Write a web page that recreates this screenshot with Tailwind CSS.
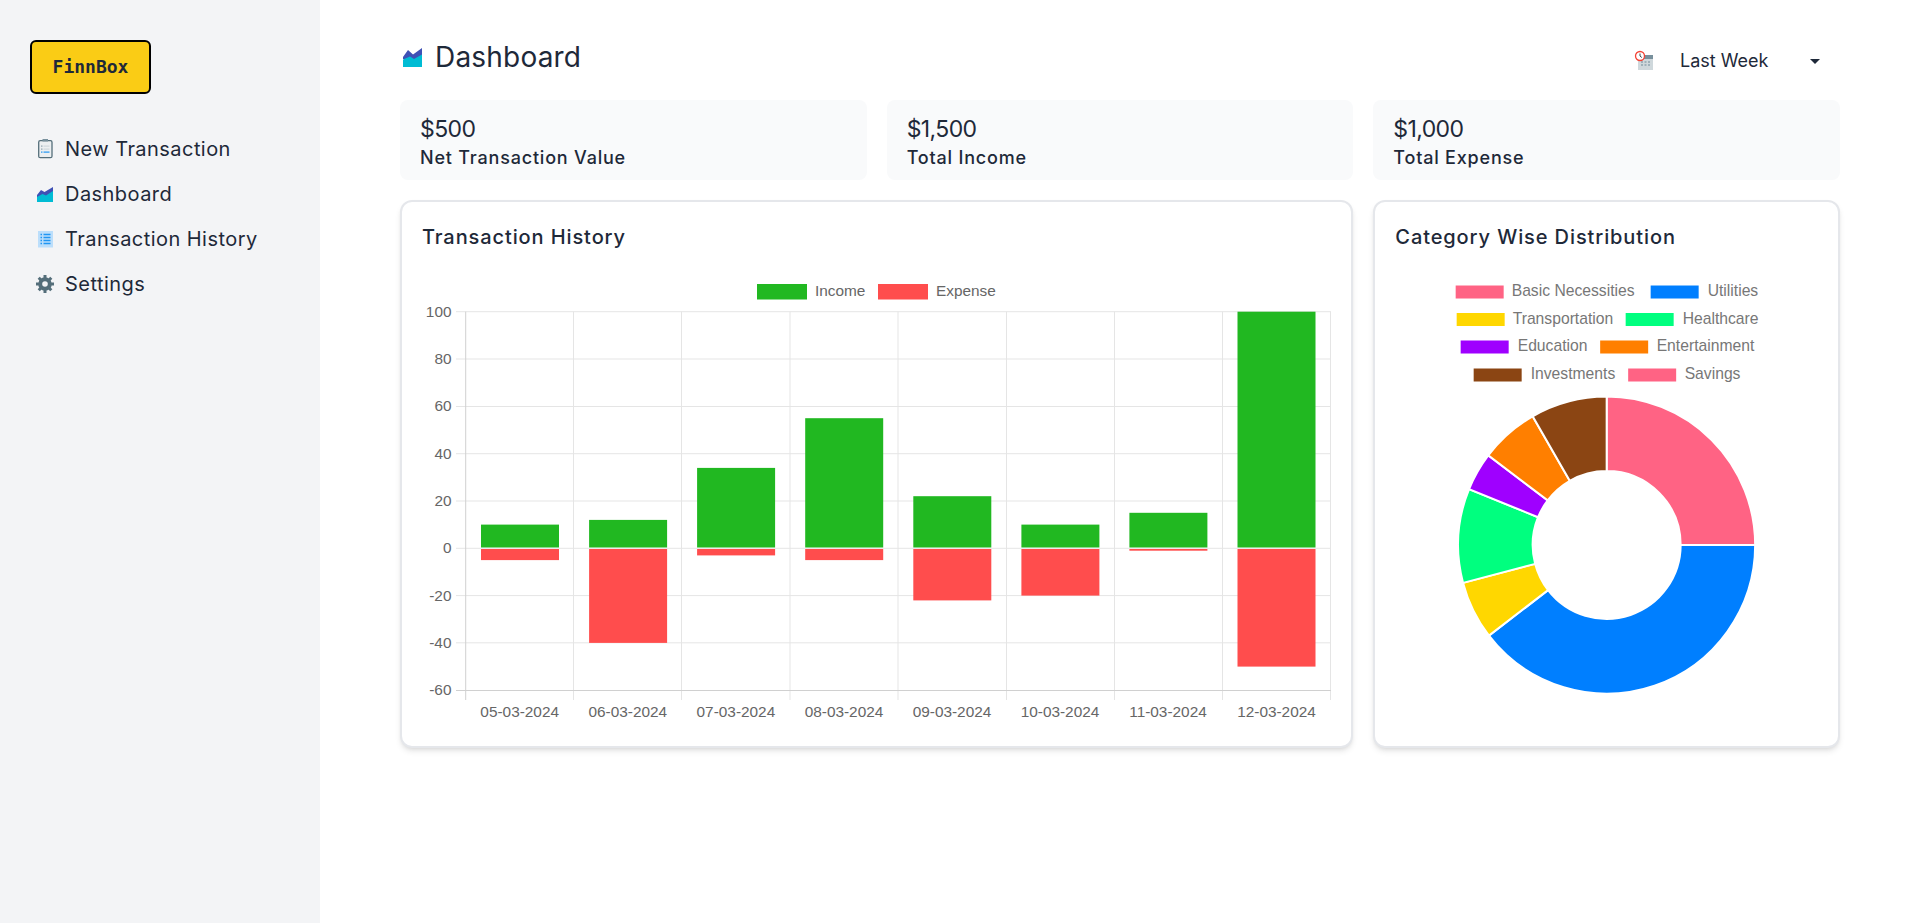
<!DOCTYPE html>
<html lang="en">
<head>
    <meta charset="UTF-8">
    <meta name="viewport" content="width=device-width, initial-scale=1.0">
    <title>FinnBox Dashboard</title>
    <script src="https://cdn.jsdelivr.net/npm/@tailwindcss/browser@4"></script>
</head>
<body class="bg-white font-['Inter',sans-serif] text-gray-800">
<div class="flex h-[923px] overflow-hidden">
    <!-- Sidebar -->
    <aside class="w-80 shrink-0 bg-gray-100 pl-[30px] pt-10">
        <div class="flex h-[54px] w-[121px] items-center justify-center rounded-md border-2 border-black bg-[#facc15] font-['DejaVu_Sans_Mono',monospace] text-lg font-bold">FinnBox</div>
        <nav class="mt-[32px] flex flex-col text-xl">
            <a class="flex h-[45px] items-center gap-[11px] pl-[5px]">
                <svg class="h-6 w-[19px]" viewBox="0 0 19 24">
                    <rect x="3.700" y="3.700" width="13.300" height="17" rx="1.500" fill="#eceff1" stroke="#546e7a" stroke-width="1.300"/>
                    <rect x="7.500" y="2" width="5.500" height="2.500" fill="#78909c"/>
                    <rect x="6" y="8.500" width="1.500" height="1.200" fill="#90a4ae"/>
                    <rect x="8.500" y="8.500" width="6" height="1.200" fill="#cfd8dc"/>
                    <rect x="6" y="11.500" width="1.500" height="1.200" fill="#90a4ae"/>
                    <rect x="8.500" y="11.500" width="6" height="1.200" fill="#cfd8dc"/>
                    <rect x="6" y="14.500" width="1.500" height="1.200" fill="#2196f3"/>
                    <rect x="8.500" y="14.500" width="6" height="1.200" fill="#2196f3"/>
                </svg>
                <span class="tracking-[0.45px]">New Transaction</span>
            </a>
            <a class="flex h-[45px] items-center gap-[11px] pl-[5px]">
                <svg class="h-6 w-[19px]" viewBox="0 0 19 24">
                    <path d="M2 13 L6 8 L9.500 10 L18 5 V15 H2Z" fill="#3f51b5"/>
                    <path d="M2 15 L7.500 12 L11 13.500 L18 9 V20 H2Z" fill="#00bcd4"/>
                </svg>
                <span class="tracking-[0.45px]">Dashboard</span>
            </a>
            <a class="flex h-[45px] items-center gap-[11px] pl-[5px]">
                <svg class="h-6 w-[19px]" viewBox="0 0 19 24">
                    <rect x="3" y="4" width="15" height="16.500" fill="#bbdefb"/>
                    <path d="M5.500 7.500h1.500M8.500 7.500h7M5.500 10.500h1.500M8.500 10.500h7M5.500 13.500h1.500M8.500 13.500h7M5.500 16.500h1.500M8.500 16.500h7" stroke="#2196f3" stroke-width="1.300"/>
                </svg>
                <span class="tracking-[0.45px]">Transaction History</span>
            </a>
            <a class="flex h-[45px] items-center gap-[11px] pl-[5px]">
                <svg class="h-6 w-[19px]" viewBox="0 0 19 24">
                    <circle cx="10" cy="12" r="4.800" fill="none" stroke="#546e7a" stroke-width="4"/>
                    <path d="M10 3v18M1 12h18M3.700 5.700l12.600 12.600M16.300 5.700L3.700 18.300" stroke="#546e7a" stroke-width="3"/>
                    <circle cx="10" cy="12" r="2.800" fill="#f3f4f6"/>
                </svg>
                <span class="tracking-[0.45px]">Settings</span>
            </a>
        </nav>
    </aside>

    <!-- Main -->
    <main class="flex-1 px-20">
        <header class="flex h-[100px] justify-between pt-[37px]">
            <div class="flex h-10 items-center gap-[12px] pl-[2px]">
                <svg class="h-6 w-[21px]" viewBox="0 0 21 24">
                    <path d="M1 12 L6 5 L11 9.500 L20 3 V14 H1Z" fill="#3f51b5"/>
                    <path d="M1 14.500 L8 11.500 L12 14 L20 9.500 V22 H1Z" fill="#00bcd4"/>
                </svg>
                <h1 class="text-[28px] tracking-[0.2px]">Dashboard</h1>
            </div>
            <div class="flex h-12 items-center pr-[20px]">
                <svg class="h-[22px] w-[22px]" viewBox="0 0 22 22">
                    <rect x="4" y="5" width="15" height="15" fill="#cfd8dc"/>
                    <rect x="4" y="5" width="15" height="4" fill="#78909c"/>
                    <path d="M7 12h2M10.500 12h2M14 12h2M7 15h2M10.500 15h2M14 15h2" stroke="#90a4ae" stroke-width="1.500"/>
                    <circle cx="6" cy="6" r="4.500" fill="#fff" stroke="#f44336" stroke-width="1.300"/>
                    <path d="M6 3.500V6l1.800 1.500" fill="none" stroke="#37474f" stroke-width="1"/>
                </svg>
                <span class="ml-[24px] w-[130px] text-lg">Last Week</span>
                <span class="h-0 w-0 border-x-[5px] border-t-[5px] border-x-transparent border-t-gray-800"></span>
            </div>
        </header>

        <!-- Stat cards -->
        <section class="grid grid-cols-3 gap-5">
            <div class="flex h-20 flex-col rounded-lg bg-gray-50 px-5 pt-[13px]">
                <div class="text-[23px] leading-8 tracking-[-0.6px]">$500</div>
                <div class="text-lg font-[450] leading-[26px] tracking-[0.8px]">Net Transaction Value</div>
            </div>
            <div class="flex h-20 flex-col rounded-lg bg-gray-50 px-5 pt-[13px]">
                <div class="text-[23px] leading-8 tracking-[-0.6px]">$1,500</div>
                <div class="text-lg font-[450] leading-[26px] tracking-[0.8px]">Total Income</div>
            </div>
            <div class="flex h-20 flex-col rounded-lg bg-gray-50 px-5 pt-[13px]">
                <div class="text-[23px] leading-8 tracking-[-0.6px]">$1,000</div>
                <div class="text-lg font-[450] leading-[26px] tracking-[0.8px]">Total Expense</div>
            </div>
        </section>

        <!-- Charts -->
        <section class="mt-5 grid grid-cols-3 gap-5">
            <div class="col-span-2 h-[548px] rounded-xl border-2 border-gray-200 bg-white shadow-md">
                <h2 class="px-5 pt-[21px] text-xl font-[450] leading-7 tracking-[0.9px]">Transaction History</h2>
                <svg class="block w-full font-['Liberation_Sans',sans-serif] text-[15.4px]" height="490" viewBox="402 251 949.33 490">
                    <!-- legend -->
                    <rect x="757" y="284" width="50" height="15.500" fill="#21b821"/>
                    <text x="815" y="296.500" fill="#666">Income</text>
                    <rect x="878" y="284" width="50" height="15.500" fill="#ff4d4d"/>
                    <text x="936" y="296.500" fill="#666">Expense</text>
                    <!-- grid -->
                    <g stroke="#e5e5e5" stroke-width="1">
                        <path d="M456 311.700H1331M456 359H1331M456 406.500H1331M456 453.700H1331M456 501H1331M456 548.300H1331M456 595.600H1331M456 642.800H1331"/>
                        <path d="M573.500 311.700V700M681.500 311.700V700M790 311.700V700M898 311.700V700M1006.500 311.700V700M1114.500 311.700V700M1222.500 311.700V700M1330.500 311.700V700"/>
                    </g>
                    <path d="M465.700 311.700V700M456 690.500H1331" stroke="#d0d0d0" stroke-width="1" fill="none"/>
                    <!-- y axis -->
                    <g fill="#666" text-anchor="end">
                        <text x="451.500" y="317">100</text>
                        <text x="451.500" y="364.500">80</text>
                        <text x="451.500" y="411.500">60</text>
                        <text x="451.500" y="459">40</text>
                        <text x="451.500" y="506">20</text>
                        <text x="451.500" y="553.500">0</text>
                        <text x="451.500" y="601">-20</text>
                        <text x="451.500" y="648">-40</text>
                        <text x="451.500" y="695.500">-60</text>
                    </g>
                    <!-- x axis -->
                    <g fill="#666" text-anchor="middle">
                        <text x="519.700" y="717.500">05-03-2024</text>
                        <text x="627.800" y="717.500">06-03-2024</text>
                        <text x="735.900" y="717.500">07-03-2024</text>
                        <text x="844" y="717.500">08-03-2024</text>
                        <text x="952" y="717.500">09-03-2024</text>
                        <text x="1060" y="717.500">10-03-2024</text>
                        <text x="1168" y="717.500">11-03-2024</text>
                        <text x="1276.500" y="717.500">12-03-2024</text>
                    </g>
                    <!-- income -->
                    <g fill="#21b821">
                        <rect x="481" y="524.600" width="78" height="22.900"/>
                        <rect x="589.100" y="519.900" width="78" height="27.600"/>
                        <rect x="697.100" y="467.900" width="78" height="79.600"/>
                        <rect x="805.200" y="418.200" width="78" height="129.300"/>
                        <rect x="913.300" y="496.200" width="78" height="51.300"/>
                        <rect x="1021.400" y="524.600" width="78" height="22.900"/>
                        <rect x="1129.400" y="512.800" width="78" height="34.700"/>
                        <rect x="1237.500" y="311.700" width="78" height="235.800"/>
                    </g>
                    <!-- expense -->
                    <g fill="#ff4d4d">
                        <rect x="481" y="549" width="78" height="11.100"/>
                        <rect x="589.100" y="549" width="78" height="93.900"/>
                        <rect x="697.100" y="549" width="78" height="6.400"/>
                        <rect x="805.200" y="549" width="78" height="11.100"/>
                        <rect x="913.300" y="549" width="78" height="51.400"/>
                        <rect x="1021.400" y="549" width="78" height="46.600"/>
                        <rect x="1129.400" y="549" width="78" height="1.700"/>
                        <rect x="1237.500" y="549" width="78" height="117.600"/>
                    </g>
                </svg>
            </div>

            <div class="h-[548px] rounded-xl border-2 border-gray-200 bg-white shadow-md">
                <h2 class="px-5 pt-[21px] text-xl font-[450] leading-7 tracking-[0.9px]">Category Wise Distribution</h2>
                <svg class="block w-full font-['Liberation_Sans',sans-serif] text-[15.7px]" height="490" viewBox="1375.330 251 462.670 490">
                    <!-- legend -->
                    <g fill="#777">
                        <rect x="1456" y="285.500" width="48" height="13" fill="#ff6384"/>
                        <text x="1512" y="296.500">Basic Necessities</text>
                        <rect x="1651" y="285.500" width="48" height="13" fill="#007fff"/>
                        <text x="1708" y="296.500">Utilities</text>
                        <rect x="1457" y="313" width="48" height="13" fill="#ffd700"/>
                        <text x="1513" y="324.500">Transportation</text>
                        <rect x="1626" y="313" width="48" height="13" fill="#00ff7f"/>
                        <text x="1683" y="324.500">Healthcare</text>
                        <rect x="1461" y="340.500" width="48" height="13" fill="#9f00ff"/>
                        <text x="1518" y="351.500">Education</text>
                        <rect x="1600.500" y="340.500" width="48" height="13" fill="#ff7f00"/>
                        <text x="1657" y="351.500">Entertainment</text>
                        <rect x="1474" y="368.500" width="48" height="13" fill="#8b4513"/>
                        <text x="1531" y="379.500">Investments</text>
                        <rect x="1628.500" y="368.500" width="48" height="13" fill="#ff6384"/>
                        <text x="1685" y="379.500">Savings</text>
                    </g>
                    <!-- donut -->
                    <g transform="translate(1607 545)" stroke="#fff" stroke-width="2">
                        <path fill="#ff6384" d="M0 -148.500A148.500 148.500 0 0 1 148.500 0L74 0A74 74 0 0 0 0 -74Z"/>
                        <path fill="#007fff" d="M148.500 0A148.500 148.500 0 0 1 -117.700 90.600L-58.600 45.100A74 74 0 0 0 74 0Z"/>
                        <path fill="#ffd700" d="M-117.700 90.600A148.500 148.500 0 0 1 -143.600 37.900L-71.500 18.900A74 74 0 0 0 -58.600 45.100Z"/>
                        <path fill="#00ff7f" d="M-143.600 37.900A148.500 148.500 0 0 1 -137.600 -55.900L-68.600 -27.800A74 74 0 0 0 -71.500 18.900Z"/>
                        <path fill="#9f00ff" d="M-137.600 -55.900A148.500 148.500 0 0 1 -118.400 -89.600L-59 -44.600A74 74 0 0 0 -68.600 -27.800Z"/>
                        <path fill="#ff7f00" d="M-118.400 -89.600A148.500 148.500 0 0 1 -74 -128.700L-36.900 -64.200A74 74 0 0 0 -59 -44.600Z"/>
                        <path fill="#8b4513" d="M-74 -128.700A148.500 148.500 0 0 1 0 -148.500L0 -74A74 74 0 0 0 -36.900 -64.200Z"/>
                    </g>
                </svg>
            </div>
        </section>
    </main>
</div>
</body>
</html>
